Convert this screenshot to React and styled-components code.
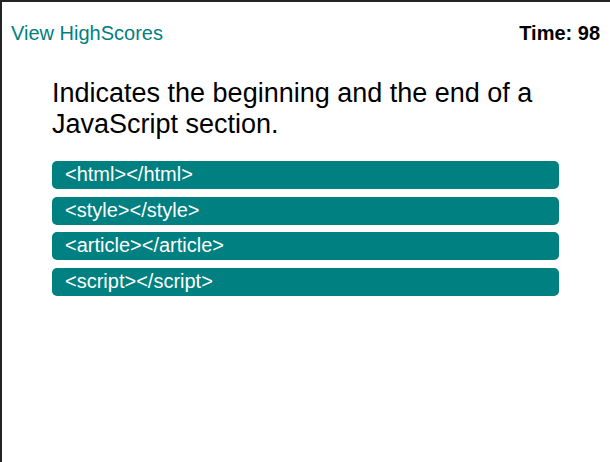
import React from 'react'
import styled, { createGlobalStyle } from 'styled-components'

const GlobalStyle = createGlobalStyle`
  html, body {
    margin: 0;
    padding: 0;
    background: #fff;
  }
  * {
    box-sizing: border-box;
  }
`

const Page = styled.div`
  min-height: 100vh;
  border-top: 2px solid #242424;
  border-left: 2px solid #242424;
  font-family: "Liberation Sans", Arial, sans-serif;
  color: #000;
`

const Header = styled.header`
  display: flex;
  justify-content: space-between;
  align-items: center;
  padding: 20px 10px 0 9px;
  font-size: 20px;
  line-height: 22px;
`

const HighScoresLink = styled.a`
  color: teal;
  text-decoration: none;
  cursor: pointer;
`

const Timer = styled.span`
  font-weight: bold;
`

const Quiz = styled.main`
  width: 507px;
  margin: 34px 0 0 50px;
`

const Question = styled.h2`
  margin: 0 0 21px;
  font-size: 27px;
  font-weight: normal;
  line-height: 31px;
`

const Choices = styled.div`
  display: flex;
  flex-direction: column;
  gap: 7.6px;
`

const Choice = styled.button`
  display: block;
  width: 100%;
  height: 28px;
  padding: 2px 12px 3px 13px;
  border: none;
  border-radius: 5px;
  background: teal;
  color: #fff;
  font-family: inherit;
  font-size: 20px;
  line-height: 23px;
  text-align: left;
  cursor: pointer;
`

const choices = [
  '<html></html>',
  '<style></style>',
  '<article></article>',
  '<script></script>',
]

export default function App() {
  return (
    <>
      <GlobalStyle />
      <Page>
        <Header>
          <HighScoresLink>View HighScores</HighScoresLink>
          <Timer>Time: 98</Timer>
        </Header>
        <Quiz>
          <Question>Indicates the beginning and the end of a JavaScript section.</Question>
          <Choices>
            {choices.map((c) => (
              <Choice key={c}>{c}</Choice>
            ))}
          </Choices>
        </Quiz>
      </Page>
    </>
  )
}
